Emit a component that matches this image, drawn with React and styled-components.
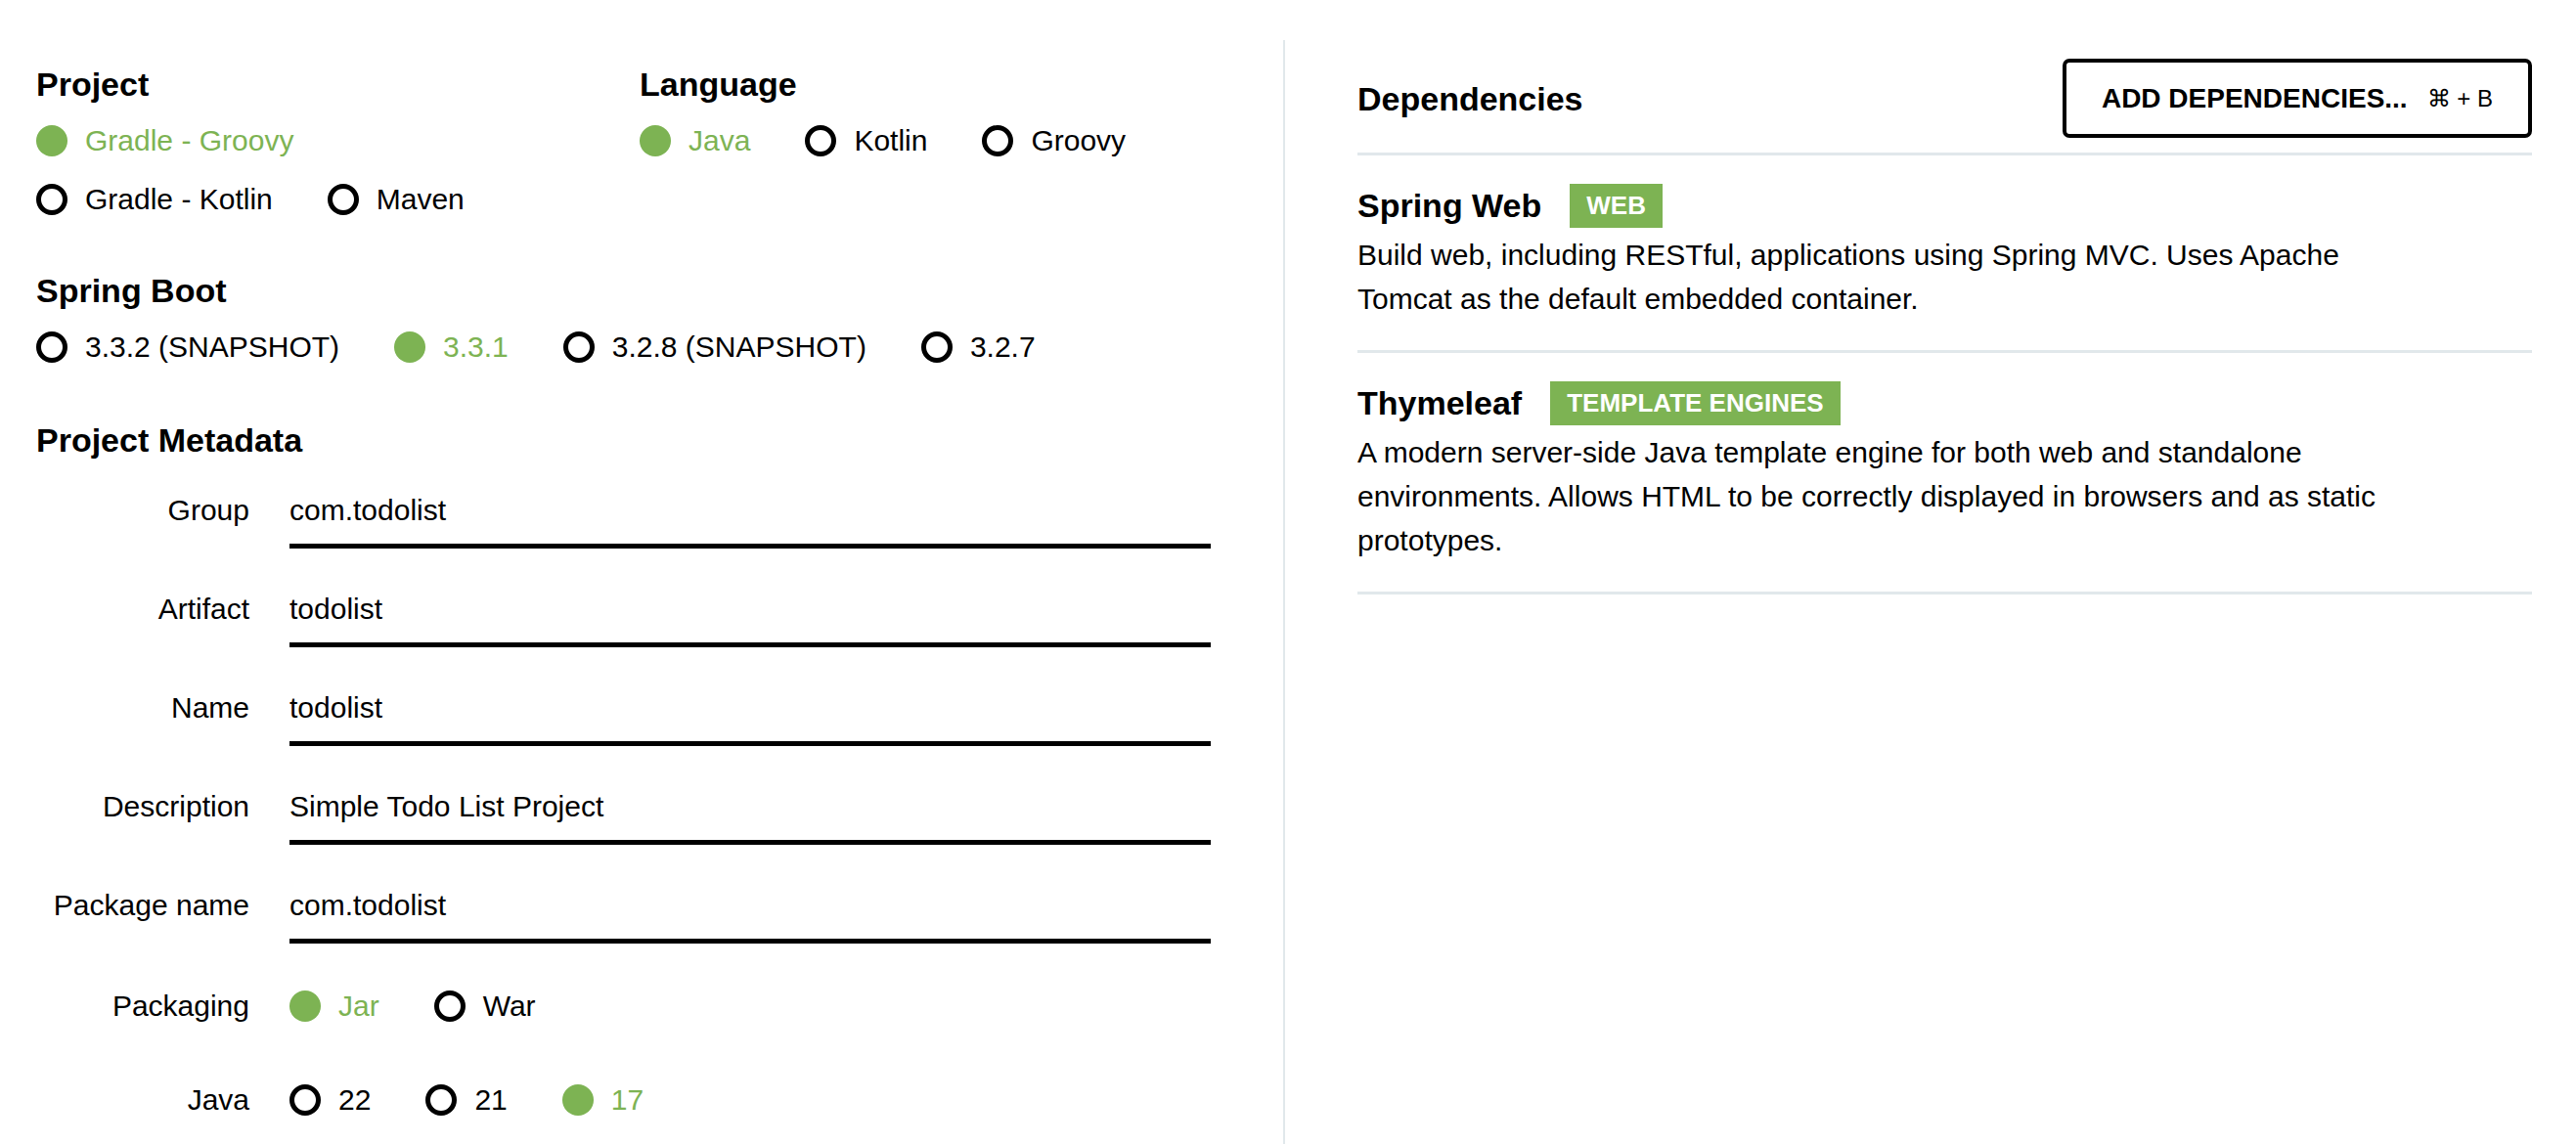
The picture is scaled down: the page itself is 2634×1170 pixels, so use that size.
import React from 'react';
import styled, { createGlobalStyle } from 'styled-components';

const GREEN = '#7db353';
const LINE = '#e1e8eb';

const GlobalStyle = createGlobalStyle`
  html, body {
    margin: 0;
    padding: 0;
    background: #fff;
  }
  body {
    font-family: "Liberation Sans", Arial, sans-serif;
    color: #000;
  }
  * {
    box-sizing: border-box;
  }
`;

const Page = styled.div`
  display: flex;
  height: 100vh;
  padding: 41px 45px 0 37px;
  overflow: hidden;
`;

const LeftCol = styled.div`
  width: 1201px;
  flex-shrink: 0;
  padding-top: 25px;
`;

const Divider = styled.div`
  width: 2px;
  flex-shrink: 0;
  background: ${LINE};
  margin: 0 74px;
`;

const RightCol = styled.div`
  width: 1201px;
  flex-shrink: 0;
`;

const TopGrid = styled.div`
  display: grid;
  grid-template-columns: 617px 1fr;
`;

const Section = styled.section`
  margin-top: ${(p) => p.$top || 0}px;
`;

const Heading = styled.h2`
  margin: 0;
  font-size: 34px;
  line-height: 40px;
  font-weight: 700;
`;

const RadioRows = styled.div`
  display: flex;
  flex-direction: column;
  gap: 20px;
  margin-top: 18px;
`;

const RadioRow = styled.div`
  display: flex;
  align-items: center;
  gap: 56px;
  height: ${(p) => p.$height || 40}px;
`;

const RadioItem = styled.label`
  display: flex;
  align-items: center;
  gap: 18px;
  font-size: 30px;
  line-height: 40px;
  color: ${(p) => (p.$checked ? GREEN : '#000')};
  cursor: pointer;
  white-space: nowrap;
`;

const Dot = styled.span`
  width: 32px;
  height: 32px;
  border-radius: 50%;
  flex-shrink: 0;
  border: ${(p) => (p.$checked ? 'none' : '5px solid #000')};
  background: ${(p) => (p.$checked ? GREEN : '#fff')};
`;

const MetaGrid = styled.div`
  display: grid;
  grid-template-columns: 218px 1fr;
  column-gap: 41px;
  row-gap: 32px;
  margin-top: 22px;
`;

const MetaLabel = styled.div`
  text-align: right;
  font-size: 30px;
  line-height: ${(p) => p.$lh || 60}px;
  white-space: nowrap;
`;

const MetaInput = styled.input`
  display: block;
  width: 100%;
  height: 69px;
  border: none;
  border-bottom: 5px solid #000;
  padding: 0 0 4px;
  font-family: inherit;
  font-size: 30px;
  color: #000;
  background: transparent;
  outline: none;
`;

const DepHeader = styled.div`
  display: flex;
  align-items: center;
  justify-content: space-between;
  padding: 19px 0 15px;
  border-bottom: 3px solid ${LINE};
`;

const AddButton = styled.button`
  display: flex;
  align-items: center;
  height: 81px;
  padding: 0 36px;
  border: 4px solid #000;
  border-radius: 7px;
  background: #fff;
  font-family: inherit;
  font-size: 28px;
  font-weight: 700;
  color: #000;
  cursor: pointer;
`;

const Shortcut = styled.span`
  margin-left: 20px;
  font-size: 24px;
  font-weight: 400;
`;

const DepItem = styled.div`
  padding: 29px 0 30px;
  border-bottom: 3px solid ${LINE};
`;

const DepTitle = styled.div`
  display: flex;
  align-items: center;
  gap: 29px;
  height: 45px;
  font-size: 34px;
  font-weight: 700;
`;

const Badge = styled.span`
  display: inline-block;
  height: 45px;
  line-height: 45px;
  padding: 0 17px;
  background: ${GREEN};
  color: #fff;
  font-size: 26px;
  font-weight: 700;
  text-transform: uppercase;
`;

const DepDesc = styled.p`
  margin: 5px 0 0;
  max-width: 1075px;
  font-size: 30px;
  line-height: 45px;
`;

function Radio({ label, checked }) {
  return (
    <RadioItem $checked={checked}>
      <Dot $checked={checked} />
      {label}
    </RadioItem>
  );
}

const metaFields = [
  ['Group', 'com.todolist'],
  ['Artifact', 'todolist'],
  ['Name', 'todolist'],
  ['Description', 'Simple Todo List Project'],
  ['Package name', 'com.todolist'],
];

const deps = [
  {
    name: 'Spring Web',
    tag: 'Web',
    desc: 'Build web, including RESTful, applications using Spring MVC. Uses Apache Tomcat as the default embedded container.',
  },
  {
    name: 'Thymeleaf',
    tag: 'Template Engines',
    desc: 'A modern server-side Java template engine for both web and standalone environments. Allows HTML to be correctly displayed in browsers and as static prototypes.',
  },
];

export default function App() {
  return (
    <>
      <GlobalStyle />
      <Page>
        <LeftCol>
          <TopGrid>
            <Section>
              <Heading>Project</Heading>
              <RadioRows>
                <RadioRow>
                  <Radio label="Gradle - Groovy" checked />
                </RadioRow>
                <RadioRow>
                  <Radio label="Gradle - Kotlin" />
                  <Radio label="Maven" />
                </RadioRow>
              </RadioRows>
            </Section>
            <Section>
              <Heading>Language</Heading>
              <RadioRows>
                <RadioRow>
                  <Radio label="Java" checked />
                  <Radio label="Kotlin" />
                  <Radio label="Groovy" />
                </RadioRow>
              </RadioRows>
            </Section>
          </TopGrid>

          <Section $top={53}>
            <Heading>Spring Boot</Heading>
            <RadioRows>
              <RadioRow>
                <Radio label="3.3.2 (SNAPSHOT)" />
                <Radio label="3.3.1" checked />
                <Radio label="3.2.8 (SNAPSHOT)" />
                <Radio label="3.2.7" />
              </RadioRow>
            </RadioRows>
          </Section>

          <Section $top={55}>
            <Heading>Project Metadata</Heading>
            <MetaGrid>
              {metaFields.map(([label, value]) => (
                <React.Fragment key={label}>
                  <MetaLabel>{label}</MetaLabel>
                  <MetaInput readOnly defaultValue={value} />
                </React.Fragment>
              ))}
              <MetaLabel $lh={64}>Packaging</MetaLabel>
              <RadioRow $height={64}>
                <Radio label="Jar" checked />
                <Radio label="War" />
              </RadioRow>
              <MetaLabel $lh={64}>Java</MetaLabel>
              <RadioRow $height={64}>
                <Radio label="22" />
                <Radio label="21" />
                <Radio label="17" checked />
              </RadioRow>
            </MetaGrid>
          </Section>
        </LeftCol>

        <Divider />

        <RightCol>
          <DepHeader>
            <Heading>Dependencies</Heading>
            <AddButton>
              ADD DEPENDENCIES...
              <Shortcut>⌘ + B</Shortcut>
            </AddButton>
          </DepHeader>
          {deps.map((d) => (
            <DepItem key={d.name}>
              <DepTitle>
                {d.name}
                <Badge>{d.tag}</Badge>
              </DepTitle>
              <DepDesc>{d.desc}</DepDesc>
            </DepItem>
          ))}
        </RightCol>
      </Page>
    </>
  );
}
